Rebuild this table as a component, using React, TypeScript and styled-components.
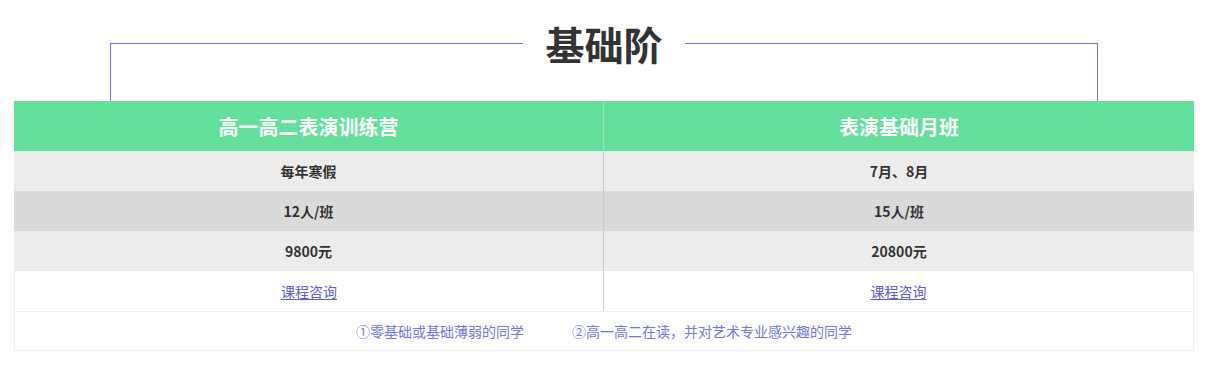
import React from 'react';
import styled, { createGlobalStyle } from 'styled-components';

const GlobalStyle = createGlobalStyle`
  body {
    margin: 0;
    background: #fff;
    font-family: "Noto Sans CJK SC", "Noto Sans", sans-serif;
  }
`;

const Wrapper = styled.div`
  width: 1180px;
  margin-left: 14px;
`;

const Bracket = styled.div`
  margin: 43px 96px 0;
  height: 58px;
  border: 1px solid #6f72d9;
  border-bottom: none;
  box-sizing: border-box;
  display: flex;
  justify-content: center;
`;

const Title = styled.h2`
  margin: -25px 0 0;
  padding: 0 22px;
  height: 48px;
  line-height: 48px;
  background: #fff;
  font-size: 39px;
  font-weight: 700;
  color: #333;
`;

const Table = styled.div`
  display: grid;
  grid-template-columns: 589px 1px 590px;
`;

const Cell = styled.div<{ $bg: string; $head?: boolean }>`
  height: ${(p) => (p.$head ? 50 : 40)}px;
  background: ${(p) => p.$bg};
  display: flex;
  align-items: center;
  justify-content: center;
  font-size: ${(p) => (p.$head ? 20 : 14)}px;
  font-weight: 700;
  color: ${(p) => (p.$head ? '#fff' : '#333')};
`;

const Divider = styled.div<{ $head?: boolean }>`
  background: ${(p) => (p.$head ? '#a9dcbf' : '#cacad6')};
`;

const LinkCell = styled(Cell)`
  border-left: 1px solid #eee;
  &:nth-last-child(1) {
    border-left: none;
    border-right: 1px solid #eee;
  }
`;

const Link = styled.a`
  color: #5b5fcf;
  font-weight: 400;
  text-decoration: underline;
  text-underline-offset: 2px;
  cursor: pointer;
`;

const Footer = styled.div`
  height: 40px;
  border: 1px solid #eee;
  box-sizing: border-box;
  display: flex;
  align-items: center;
  justify-content: center;
  gap: 48px;
  font-size: 14px;
  color: #7377dc;
`;

const rows = [
  { bg: '#ececec', left: '每年寒假', right: '7月、8月' },
  { bg: '#dadada', left: '12人/班', right: '15人/班' },
  { bg: '#ececec', left: '9800元', right: '20800元' },
];

export default function App() {
  return (
    <Wrapper>
      <GlobalStyle />
      <Bracket>
        <Title>基础阶</Title>
      </Bracket>
      <Table>
        <Cell $bg="#62e09c" $head>高一高二表演训练营</Cell>
        <Divider $head />
        <Cell $bg="#62e09c" $head>表演基础月班</Cell>
        {rows.map((row) => (
          <React.Fragment key={row.left}>
            <Cell $bg={row.bg}>{row.left}</Cell>
            <Divider />
            <Cell $bg={row.bg}>{row.right}</Cell>
          </React.Fragment>
        ))}
        <LinkCell $bg="#fff">
          <Link>课程咨询</Link>
        </LinkCell>
        <Divider />
        <LinkCell $bg="#fff">
          <Link>课程咨询</Link>
        </LinkCell>
      </Table>
      <Footer>
        <span>①零基础或基础薄弱的同学</span>
        <span>②高一高二在读，并对艺术专业感兴趣的同学</span>
      </Footer>
    </Wrapper>
  );
}
